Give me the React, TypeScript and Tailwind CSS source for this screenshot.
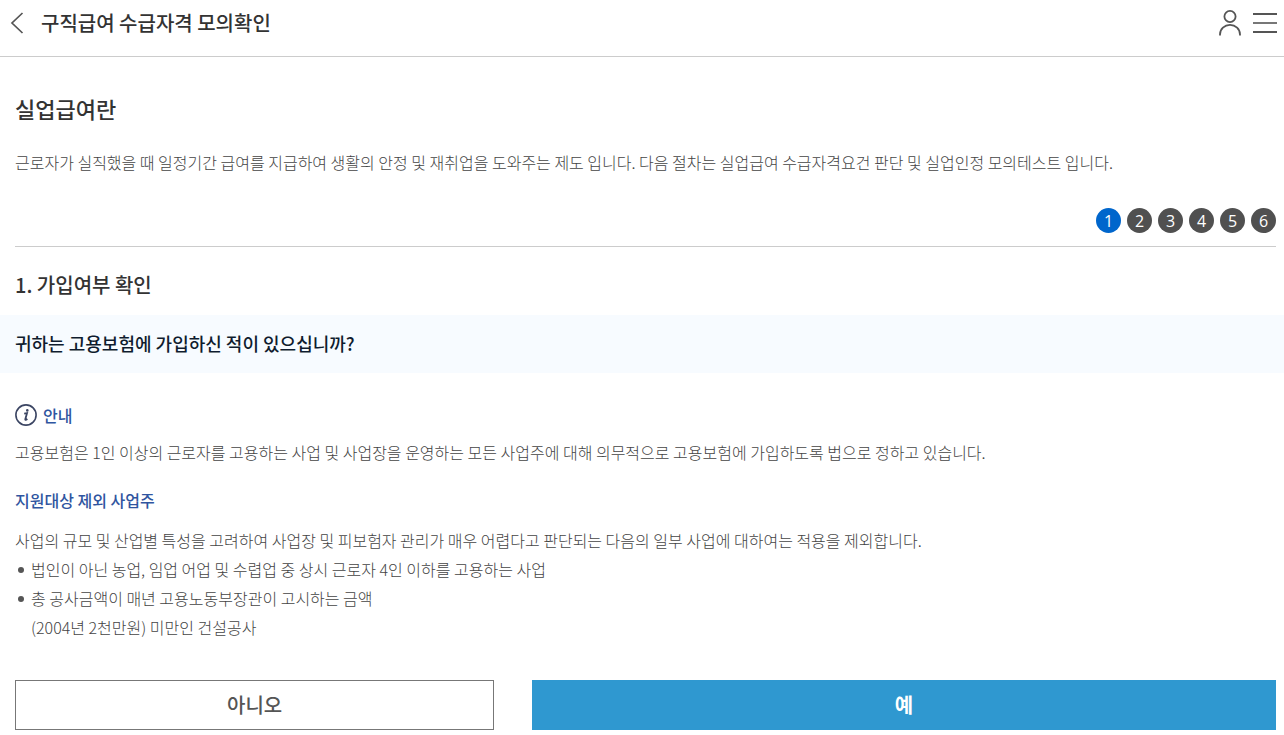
const steps = [1, 2, 3, 4, 5, 6];
const currentStep = 1;

function BackIcon() {
  return (
    <svg width="14" height="24" viewBox="0 0 14 24" fill="none" stroke="#555" strokeWidth="1.7">
      <path d="M12.5 2 L2 12 L12.5 22" />
    </svg>
  );
}

function UserIcon() {
  return (
    <svg width="22" height="26" viewBox="0 0 22 26" fill="none" stroke="#555" strokeWidth="1.8">
      <circle cx="11" cy="6.5" r="5.6" />
      <path d="M1 25.5 V24.5 A10 9.6 0 0 1 21 24.5 V25.5" />
    </svg>
  );
}

function MenuIcon() {
  return (
    <svg width="24" height="20" viewBox="0 0 24 20" fill="none" stroke="#555" strokeWidth="2">
      <path d="M0 1 H24 M0 19 H24" />
      <path d="M0 10 H24" strokeWidth="1.6" />
    </svg>
  );
}

function InfoIcon() {
  return (
    <svg width="22" height="22" viewBox="0 0 22 22" fill="none">
      <circle cx="11" cy="11" r="10.1" stroke="#3b4563" strokeWidth="1.6" />
      <circle cx="12.3" cy="6.4" r="1.3" fill="#3b4563" />
      <path d="M9.2 9.7 L12 9.2 L10.3 15.2 Q10.1 16.6 12.4 15" stroke="#3b4563" strokeWidth="1.8" />
    </svg>
  );
}

export default function App() {
  return (
    <div className="bg-white font-['Noto_Sans_CJK_KR',sans-serif] text-base font-light text-[#444]">
      <header className="flex h-[57px] items-center border-b border-[#ccc] pr-[7px] pb-[10px] pl-[10px]">
        <button type="button" aria-label="이전">
          <BackIcon />
        </button>
        <h1 className="ml-[17px] flex-1 text-xl font-medium text-[#333]">구직급여 수급자격 모의확인</h1>
        <div className="flex items-center gap-3">
          <button type="button" aria-label="내 정보">
            <UserIcon />
          </button>
          <button type="button" aria-label="메뉴">
            <MenuIcon />
          </button>
        </div>
      </header>

      <main className="pt-9 pb-[5px]">
        {/* 소개 */}
        <section className="mr-2 ml-[15px] border-b border-[#ccc] pb-[13px]">
          <h2 className="text-[22px] leading-[30px] font-medium text-[#333]">실업급여란</h2>
          <p className="mt-[25px] leading-[29px]">
            근로자가 실직했을 때 일정기간 급여를 지급하여 생활의 안정 및 재취업을 도와주는 제도 입니다. 다음 절차는
            실업급여 수급자격요건 판단 및 실업인정 모의테스트 입니다.
          </p>
          <ol className="mt-[31px] flex justify-end gap-[6px]">
            {steps.map((step) => (
              <li
                key={step}
                aria-current={step === currentStep ? 'step' : undefined}
                className={`flex size-[25px] items-center justify-center rounded-full font-['Open_Sans',sans-serif] leading-6 font-normal text-white ${
                  step === currentStep ? 'bg-[#0066cc]' : 'bg-[#505050]'
                }`}
              >
                {step}
              </li>
            ))}
          </ol>
        </section>

        {/* 질문 */}
        <h3 className="mt-[23px] px-[15px] text-xl leading-[30px] font-medium text-[#333]">1. 가입여부 확인</h3>
        <p className="mt-[15px] bg-[#f7fbff] px-[15px] pt-[14px] pb-4 text-lg leading-7 font-medium text-[#0f1c2e]">
          귀하는 고용보험에 가입하신 적이 있으십니까?
        </p>

        {/* 안내 */}
        <section className="mt-[31px] mr-2 ml-[15px]">
          <h4 className="flex items-center gap-[6px] leading-[22px] font-medium text-[#2f55a0]">
            <InfoIcon />
            안내
          </h4>
          <p className="mt-3 leading-[29px]">
            고용보험은 1인 이상의 근로자를 고용하는 사업 및 사업장을 운영하는 모든 사업주에 대해 의무적으로 고용보험에
            가입하도록 법으로 정하고 있습니다.
          </p>
          <h4 className="mt-[22px] leading-[22px] font-medium text-[#2f55a0]">지원대상 제외 사업주</h4>
          <div className="mt-[15px] leading-[29px]">
            <p>
              사업의 규모 및 산업별 특성을 고려하여 사업장 및 피보험자 관리가 매우 어렵다고 판단되는 다음의 일부 사업에
              대하여는 적용을 제외합니다.
            </p>
            <ul>
              <li className="flex gap-[7px] pl-[3px] before:mt-3 before:size-[6px] before:shrink-0 before:rounded-full before:bg-[#555]">
                법인이 아닌 농업, 임업 어업 및 수렵업 중 상시 근로자 4인 이하를 고용하는 사업
              </li>
              <li className="flex gap-[7px] pl-[3px] before:mt-3 before:size-[6px] before:shrink-0 before:rounded-full before:bg-[#555]">
                <span>
                  총 공사금액이 매년 고용노동부장관이 고시하는 금액
                  <br />
                  (2004년 2천만원) 미만인 건설공사
                </span>
              </li>
            </ul>
          </div>
        </section>

        <div className="mt-[38px] mr-2 ml-[15px] flex justify-between">
          <button
            type="button"
            className="h-[50px] w-[38%] border border-[#777] bg-white text-xl font-medium text-[#555]"
          >
            아니오
          </button>
          <button type="button" className="h-[50px] w-[59%] bg-[#2f98d0] text-xl font-bold text-white">
            예
          </button>
        </div>
      </main>
    </div>
  );
}
